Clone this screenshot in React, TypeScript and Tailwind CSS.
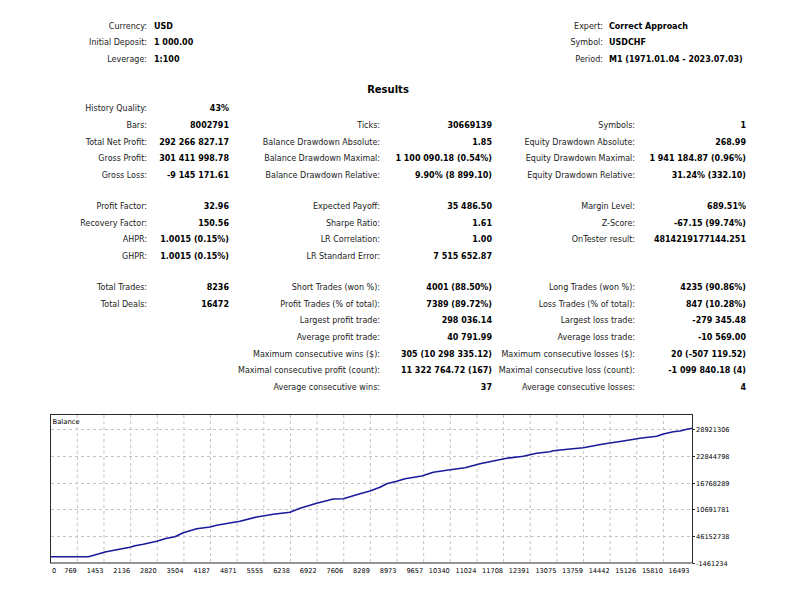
const header = {
  left: [
    ["Currency:", "USD"],
    ["Initial Deposit:", "1 000.00"],
    ["Leverage:", "1:100"],
  ],
  right: [
    ["Expert:", "Correct Approach"],
    ["Symbol:", "USDCHF"],
    ["Period:", "M1 (1971.01.04 - 2023.07.03)"],
  ],
};

type Row = string[];

const group1: Row[] = [
  ["History Quality:", "43%", "", "", "", ""],
  ["Bars:", "8002791", "Ticks:", "30669139", "Symbols:", "1"],
  ["Total Net Profit:", "292 266 827.17", "Balance Drawdown Absolute:", "1.85", "Equity Drawdown Absolute:", "268.99"],
  ["Gross Profit:", "301 411 998.78", "Balance Drawdown Maximal:", "1 100 090.18 (0.54%)", "Equity Drawdown Maximal:", "1 941 184.87 (0.96%)"],
  ["Gross Loss:", "-9 145 171.61", "Balance Drawdown Relative:", "9.90% (8 899.10)", "Equity Drawdown Relative:", "31.24% (332.10)"],
];

const group2: Row[] = [
  ["Profit Factor:", "32.96", "Expected Payoff:", "35 486.50", "Margin Level:", "689.51%"],
  ["Recovery Factor:", "150.56", "Sharpe Ratio:", "1.61", "Z-Score:", "-67.15 (99.74%)"],
  ["AHPR:", "1.0015 (0.15%)", "LR Correlation:", "1.00", "OnTester result:", "4814219177144.251"],
  ["GHPR:", "1.0015 (0.15%)", "LR Standard Error:", "7 515 652.87", "", ""],
];

const group3: Row[] = [
  ["Total Trades:", "8236", "Short Trades (won %):", "4001 (88.50%)", "Long Trades (won %):", "4235 (90.86%)"],
  ["Total Deals:", "16472", "Profit Trades (% of total):", "7389 (89.72%)", "Loss Trades (% of total):", "847 (10.28%)"],
  ["", "", "Largest profit trade:", "298 036.14", "Largest loss trade:", "-279 345.48"],
  ["", "", "Average profit trade:", "40 791.99", "Average loss trade:", "-10 569.00"],
  ["", "", "Maximum consecutive wins ($):", "305 (10 298 335.12)", "Maximum consecutive losses ($):", "20 (-507 119.52)"],
  ["", "", "Maximal consecutive profit (count):", "11 322 764.72 (167)", "Maximal consecutive loss (count):", "-1 099 840.18 (4)"],
  ["", "", "Average consecutive wins:", "37", "Average consecutive losses:", "4"],
];

const xLabels = [
  "0", "769", "1453", "2136", "2820", "3504", "4187", "4871", "5555", "6238", "6922", "7606", "8289",
  "8973", "9657", "10340", "11024", "11708", "12391", "13075", "13759", "14442", "15126", "15810", "16493",
];

const yLabels: [number, string][] = [
  [429, "28921306"],
  [456, "22844798"],
  [483, "16768289"],
  [509, "10691781"],
  [536, "46152738"],
  [563, "-1461234"],
];

// balance curve, traced in page coordinates
const pts = [
  [50, 556.7], [88.3, 556.7], [98.3, 554], [105, 552], [116.7, 549.7], [130, 547.3], [135, 545.7],
  [143.3, 544.3], [156.7, 541.3], [166.7, 538.3], [175, 536.7], [183.3, 532.7], [196.7, 528.7],
  [210, 527], [216.7, 525.3], [240, 521.3], [256.7, 517], [273.3, 514.3], [290, 512.3], [300, 508.3],
  [316.7, 503.3], [333.3, 499], [343.3, 498.7], [360, 493.7], [370, 491], [380, 487.3], [386.7, 483.7],
  [396.7, 481.3], [405, 478.7], [421.7, 476], [433.3, 472.3], [446.7, 470.3], [465, 467.7], [480, 463.7],
  [493.3, 461], [506.7, 458.3], [523.3, 456.3], [536.7, 453.3], [550, 451.7], [553.3, 450.7], [570, 449],
  [583.3, 447.7], [596.7, 445.3], [603.3, 444], [623.3, 441], [640, 438.3], [656.7, 436.3], [663.3, 434],
  [673.3, 431.7], [680, 431], [686.7, 429.3], [692.5, 428.3],
];

function StatRow({ row }: { row: Row }) {
  return (
    <div className="grid h-[16.67px] grid-cols-[147px_82px_151px_112px_143px_111px] leading-[16.67px] whitespace-nowrap">
      {row.map((cell, i) => (
        <div
          key={i}
          className={i % 2 === 0 ? "text-right text-[#222]" : "text-right font-bold text-black"}
        >
          {cell}
        </div>
      ))}
    </div>
  );
}

function BalanceChart() {
  const step = 26.64;
  const grid = Array.from({ length: 23 }, (_, k) => 50.7 + step * (k + 1));
  return (
    <svg width={800} height={180} viewBox="0 405 800 180" className="block">
      <defs>
        <clipPath id="axis-clip">
          <rect x={690} y={405} width={38.5} height={180} />
        </clipPath>
      </defs>
      <rect x={50.5} y={414.5} width={642} height={148.5} fill="#fff" />
      {grid.map((x) => (
        <line key={x} x1={x} x2={x} y1={415} y2={563} stroke="#c4c4c4" strokeDasharray="3 3" />
      ))}
      {yLabels.slice(0, 5).map(([y]) => (
        <line key={y} x1={51} x2={692} y1={y + 0.5} y2={y + 0.5} stroke="#c4c4c4" strokeDasharray="3 3" />
      ))}
      <polyline
        points={pts.map((p) => p.join(",")).join(" ")}
        fill="none"
        stroke="#1a1a9c"
        strokeWidth={1.6}
        strokeLinejoin="round"
      />
      <rect x={50.5} y={414.5} width={642} height={148.5} fill="none" stroke="#2a2a2a" />
      <text x={52.5} y={424} fontSize={6.8} fill="#000" fontFamily="'DejaVu Sans', sans-serif">
        Balance
      </text>
      <g fontFamily="'DejaVu Sans', sans-serif" fontSize={6.6} fill="#000">
        {yLabels.map(([y, t], i) => (
          <g key={t}>
            <line x1={693} x2={695} y1={y + 0.5} y2={y + 0.5} stroke="#2a2a2a" />
            <text x={696} y={y + 2.6} clipPath={i === yLabels.length - 1 ? "url(#axis-clip)" : undefined}>
              {t}
            </text>
          </g>
        ))}
      </g>
      <g fontFamily="'DejaVu Sans', sans-serif" fontSize={6.6} fill="#000">
        {xLabels.map((t, k) =>
          k === 0 ? (
            <text key={t} x={52} y={572.5}>
              {t}
            </text>
          ) : (
            <text key={t} x={50.7 + step * k - 0.5} y={572.5} textAnchor="end">
              {t}
            </text>
          )
        )}
      </g>
    </svg>
  );
}

export default function App() {
  return (
    <div className="h-[600px] w-[800px] overflow-hidden bg-white pt-[18.5px] font-['DejaVu_Sans',sans-serif] text-[8px] text-black">
      {/* Header */}
      <div className="flex">
        <div className="grid w-[500px] grid-cols-[147px_1fr] auto-rows-[16.67px] leading-[16.67px]">
          {header.left.map(([k, v]) => (
            <div key={k} className="contents">
              <div className="text-right text-[#222]">{k}</div>
              <div className="pl-[7px] font-bold">{v}</div>
            </div>
          ))}
        </div>
        <div className="grid grid-cols-[103px_1fr] auto-rows-[16.67px] leading-[16.67px]">
          {header.right.map(([k, v]) => (
            <div key={k} className="contents">
              <div className="text-right text-[#222]">{k}</div>
              <div className="pl-[6px] font-bold whitespace-nowrap">{v}</div>
            </div>
          ))}
        </div>
      </div>

      {/* Results */}
      <div className="mt-[11.5px] h-[19px] w-[776px] text-center text-[10px] leading-[19px] font-bold">Results</div>

      <div className="mt-[2.5px]">
        {group1.map((r) => (
          <StatRow key={r[0] + r[2]} row={r} />
        ))}
      </div>
      <div className="mt-[14.4px]">
        {group2.map((r) => (
          <StatRow key={r[0] + r[2]} row={r} />
        ))}
      </div>
      <div className="mt-[14.4px]">
        {group3.map((r) => (
          <StatRow key={r[0] + r[2]} row={r} />
        ))}
      </div>

      {/* Balance graph */}
      <div className="mt-[8px]">
        <BalanceChart />
      </div>
    </div>
  );
}
